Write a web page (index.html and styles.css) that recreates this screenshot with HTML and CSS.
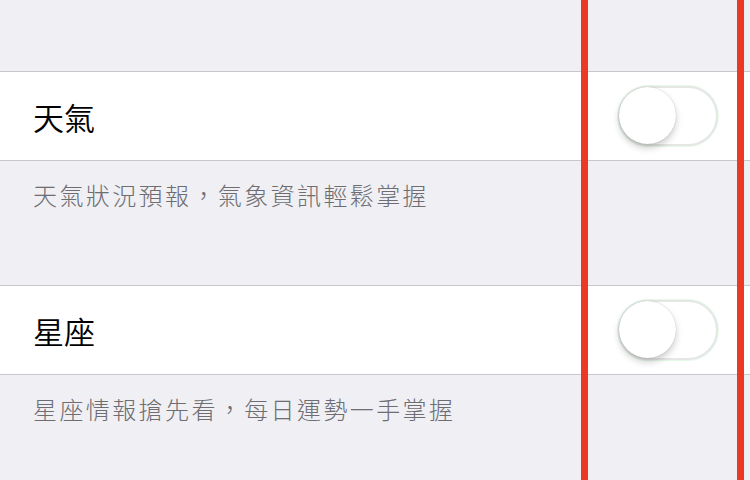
FILE: index.html
```html
<!DOCTYPE html>
<html lang="zh-TW">
<head>
    <meta charset="UTF-8">
    <meta name="viewport" content="width=device-width, initial-scale=1.0">
    <title>通知設定</title>
    <link rel="stylesheet" href="styles.css">
</head>
<body>
    <div class="settings">
        <div class="setting-group">
            <div class="setting-row">
                <span class="setting-title">天氣</span>
                <label class="switch">
                    <input type="checkbox">
                    <span class="switch-knob"></span>
                </label>
            </div>
            <p class="setting-footer">天氣狀況預報，氣象資訊輕鬆掌握</p>
        </div>

        <div class="setting-group">
            <div class="setting-row">
                <span class="setting-title">星座</span>
                <label class="switch">
                    <input type="checkbox">
                    <span class="switch-knob"></span>
                </label>
            </div>
            <p class="setting-footer">星座情報搶先看，每日運勢一手掌握</p>
        </div>

        <div class="guide-lines"></div>
    </div>
</body>
</html>
```

FILE: styles.css
```css
body {
    margin: 0;
    background: #efeff4;
    font-family: "Noto Sans CJK TC", "Noto Sans", sans-serif;
    color: #000;
}

.settings {
    position: relative;
    width: 750px;
    height: 480px;
    overflow: hidden;
    padding-top: 71px;
    box-sizing: border-box;
}

.setting-row {
    display: flex;
    align-items: center;
    justify-content: space-between;
    height: 88px;
    padding: 0 32px 0 33px;
    background: #fff;
    border-top: 1px solid #c8c7cc;
    border-bottom: 1px solid #c8c7cc;
}

.setting-title {
    font-size: 31px;
    line-height: 31px;
    font-weight: 350;
    padding-top: 1px;
}

.setting-footer {
    margin: 0;
    height: 105px;
    padding: 19px 33px 0;
    font-size: 24px;
    line-height: 30px;
    font-weight: 300;
    letter-spacing: 2.4px;
    color: #6d6d72;
}

/* iOS style switch, off state */
.switch {
    position: relative;
    width: 100px;
    height: 60px;
}

.switch input {
    display: none;
}

.switch-knob {
    display: block;
    box-sizing: border-box;
    width: 100%;
    height: 100%;
    border-radius: 30px;
    border: 2px solid #e6e6e6;
    background: #fff;
    box-shadow: 0 0 0 1px rgba(76, 217, 100, 0.15);
}

.switch-knob::before {
    content: "";
    position: absolute;
    left: 1px;
    top: 1px;
    width: 57px;
    height: 57px;
    border-radius: 50%;
    background: #fff;
    box-shadow: 0 4px 7px rgba(0, 0, 0, 0.2), 0 0 1px rgba(0, 0, 0, 0.25);
}

.guide-lines {
    position: absolute;
    top: 0;
    bottom: 0;
    left: 581px;
    width: 149px;
    border-left: 7px solid #ea3a26;
    border-right: 7px solid #ea3a26;
    pointer-events: none;
}
```
